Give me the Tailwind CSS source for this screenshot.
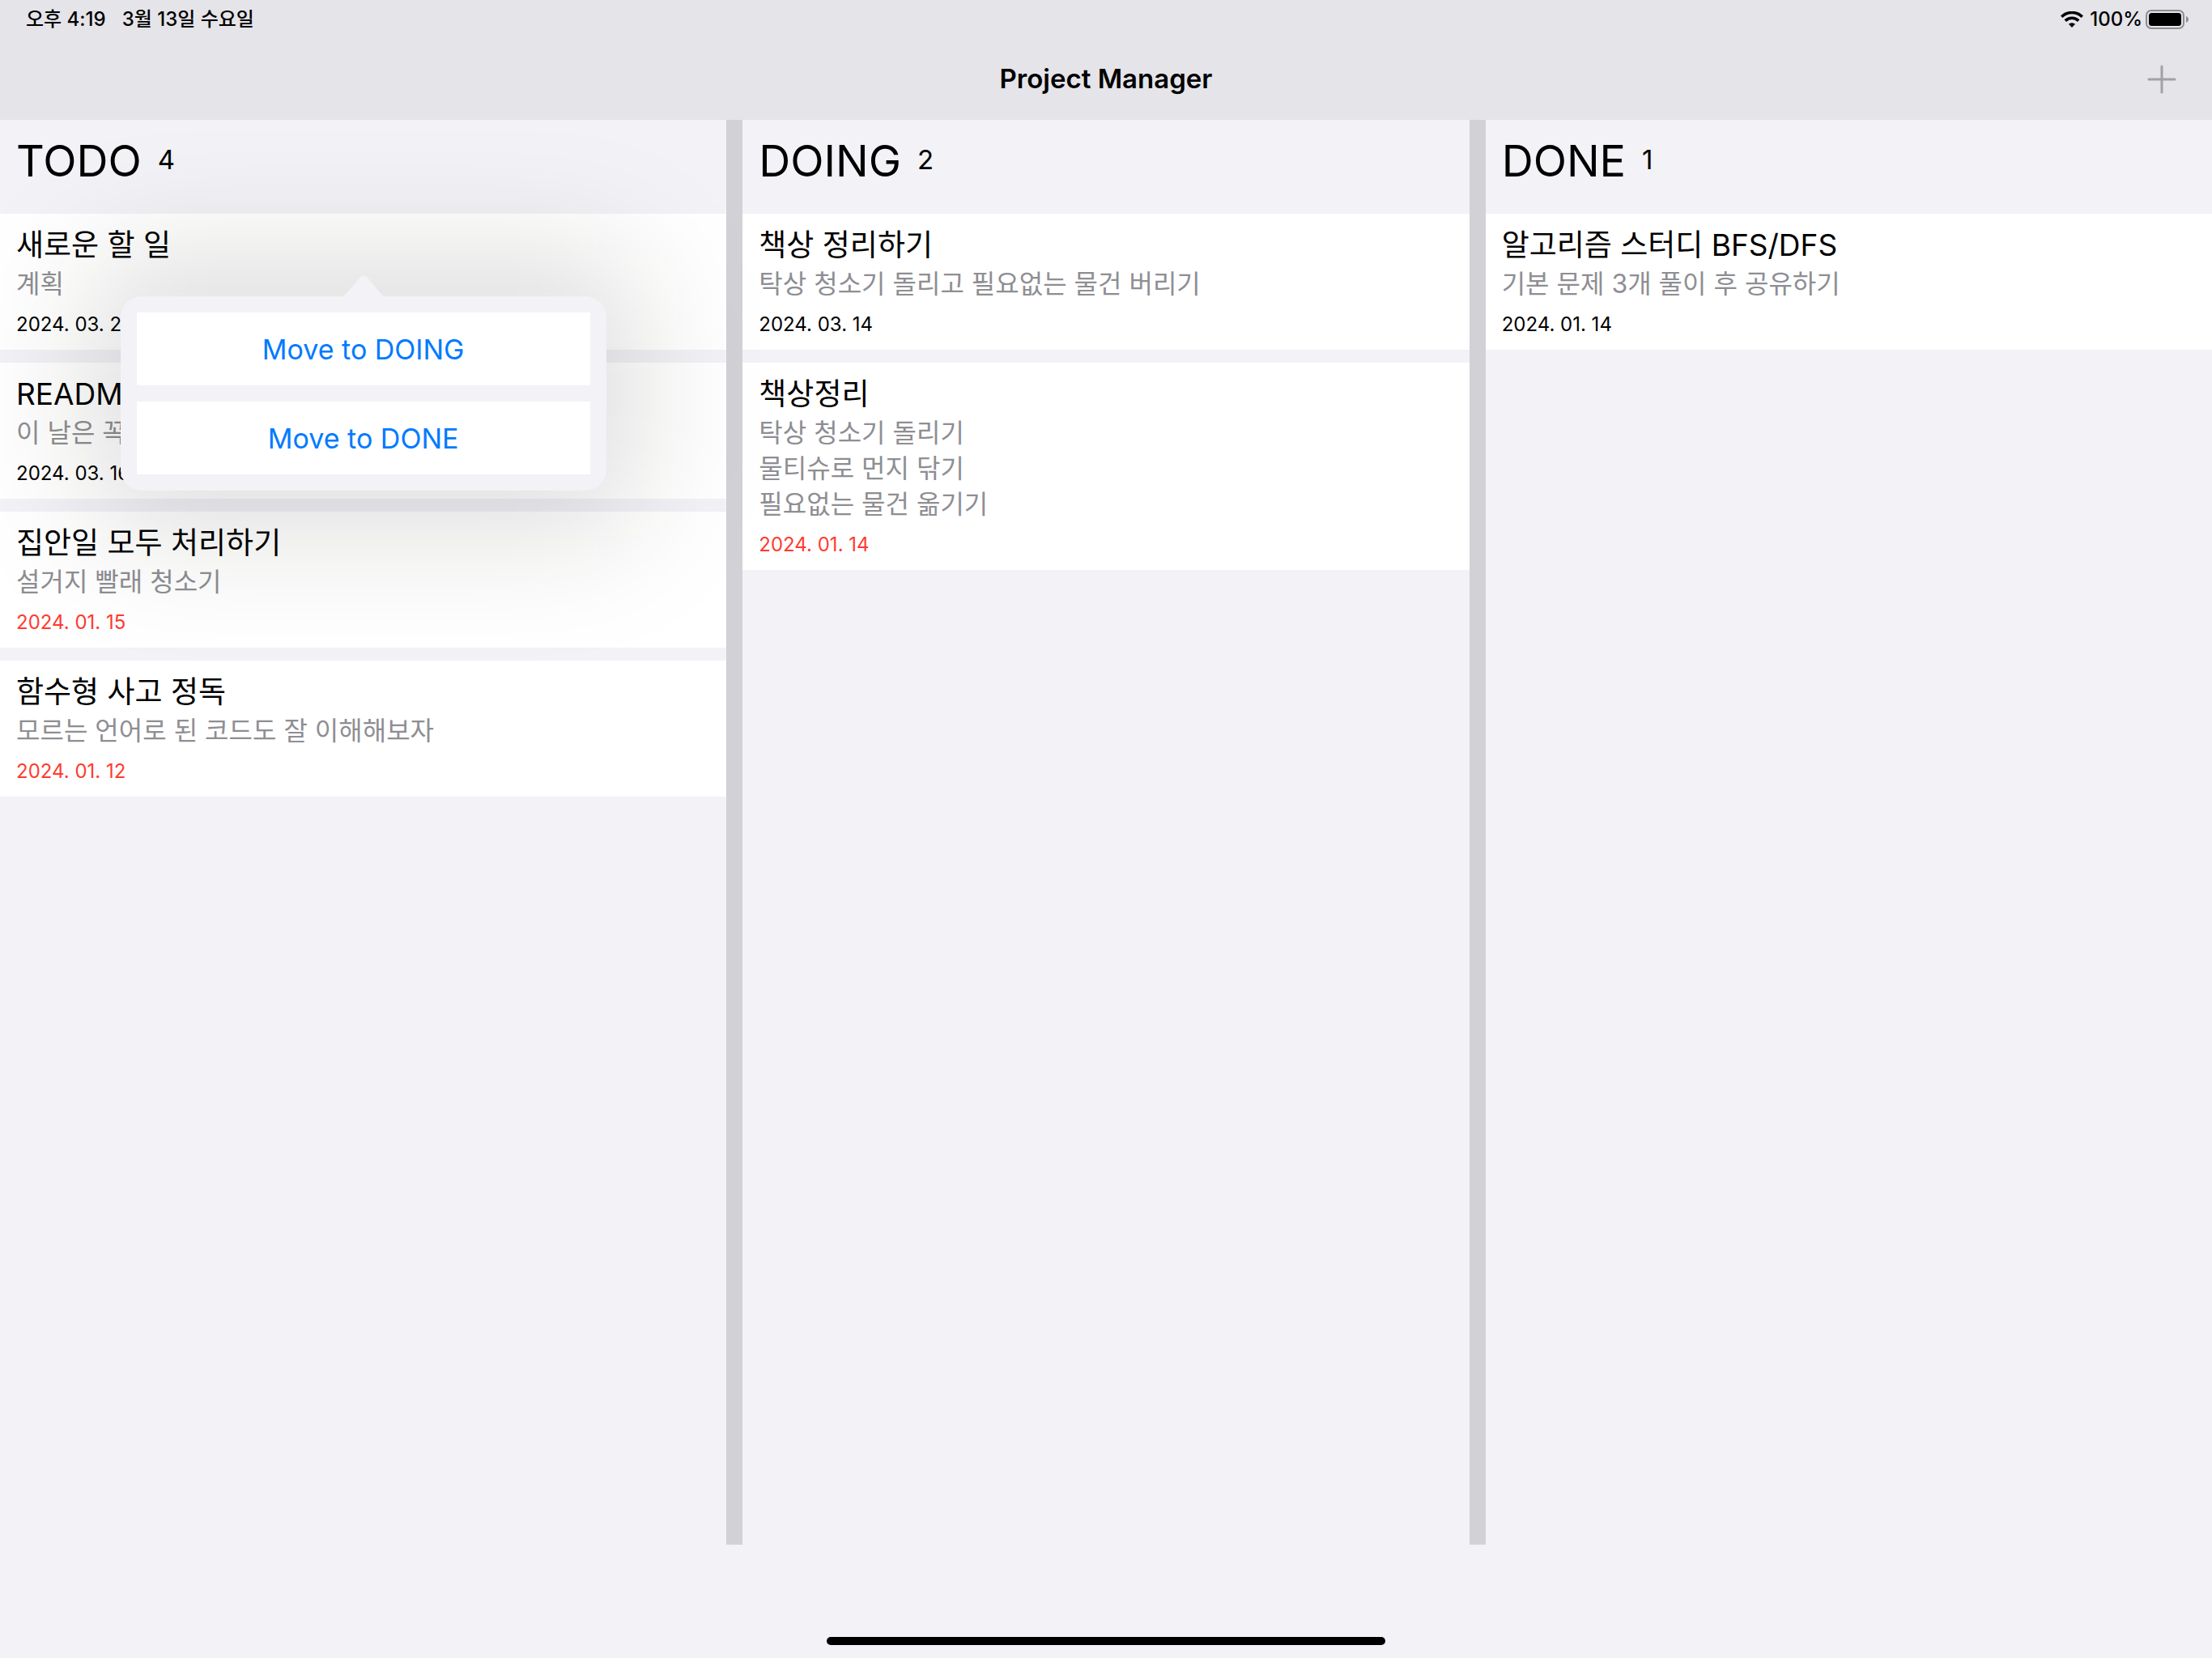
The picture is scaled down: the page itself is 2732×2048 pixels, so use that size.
<!DOCTYPE html>
<html lang="ko">
<head>
<meta charset="utf-8">
<meta name="viewport" content="width=device-width, initial-scale=1">
<title>Project Manager</title>
<script src="https://cdn.jsdelivr.net/npm/@tailwindcss/browser@4"></script>
</head>
<body class="flex min-h-screen flex-col overflow-x-hidden bg-[#f2f2f7] font-['Inter','Noto_Sans_CJK_KR',sans-serif] text-black">
  <header class="bg-[#e5e4e9]">
    <div class="flex h-12 items-center justify-between pr-7 pl-8 text-[24px] font-medium">
      <div class="flex gap-5">
        <time>오후 4:19</time>
        <span>3월 13일 수요일</span>
      </div>
      <div class="flex items-center">
        <svg class="mr-2 h-5 w-7" viewBox="0 0 28 20" fill="none" stroke="#000" stroke-width="3.6" aria-label="Wi-Fi">
          <path d="M1.2 6.8A18.2 18.2 0 0 1 26.8 6.8"/>
          <path d="M5.8 11.6A11.8 11.8 0 0 1 22.2 11.6"/>
          <path d="M14 20l-4.1-4.2a5.9 5.9 0 0 1 8.2 0z" fill="#000" stroke="none"/>
        </svg>
        <span>100%</span>
        <svg class="ml-1 h-6 w-[54px]" viewBox="0 0 54 24" aria-label="Battery">
          <rect x="1" y="1" width="46" height="22" rx="6" fill="none" stroke="#8e8d91" stroke-width="2"/>
          <rect x="4" y="4" width="40" height="16" rx="3.5"/>
          <path d="M50 8c4 1.600 4 6.400 0 8z" fill="#8e8d91"/>
        </svg>
      </div>
    </div>
    <nav class="grid h-25 grid-cols-[1fr_auto_1fr] items-center px-11">
      <h1 class="col-start-2 text-[33px] font-semibold">Project Manager</h1>
      <button type="button" aria-label="Add" class="justify-self-end">
        <svg class="h-9 w-9" viewBox="0 0 36 36" stroke="#a2a1a4" stroke-width="3" stroke-linecap="round"><path d="M18 2v32M2 18h32"/></svg>
      </button>
    </nav>
  </header>

  <main class="grid grow grid-cols-3 gap-5 bg-[#d1d1d6]">
    <section class="bg-[#f2f2f7]">
      <div class="flex h-29 items-center gap-5 px-5 pb-4">
        <h2 class="text-[54px]">TODO</h2>
        <span class="text-[33px]">4</span>
      </div>
      <ul class="flex flex-col gap-4">
        <li class="relative bg-white px-5 pt-[17px] pb-[15px]">
          <h3 class="text-[37px] leading-11">새로운 할 일</h3>
          <p class="mt-1 text-[32px] leading-11 text-[#8e8e93]">계획</p>
          <p class="mt-3 text-[24px] leading-8">2024. 03. 20</p>
          <div role="dialog" aria-label="Move" class="absolute top-[102px] left-1/2 z-10 w-150 -translate-x-1/2">
            <!-- soft shadow around the popover -->
            <div class="pointer-events-none absolute -inset-x-10 -inset-y-14 rounded-[60px] bg-[#10100a]/13 blur-[76px]"></div>
            <div class="relative flex flex-col gap-5 rounded-[26px] bg-[#f2f2f7] p-5">
              <svg class="absolute -top-[26px] left-1/2 h-[27px] w-15 -translate-x-1/2" viewBox="0 0 60 27" fill="#f2f2f7"><path d="M0 27c4 0 6-2 9-5L25 3q5-5 10 0l16 19c3 3 5 5 9 5z"/></svg>
              <button type="button" class="h-[90px] bg-white text-[34px] text-[#007aff]">Move to DOING</button>
              <button type="button" class="h-[90px] bg-white text-[34px] text-[#007aff]">Move to DONE</button>
            </div>
          </div>
        </li>
        <li class="bg-white px-5 pt-[17px] pb-[15px]">
          <h3 class="text-[37px] leading-11">README</h3>
          <p class="mt-1 text-[32px] leading-11 text-[#8e8e93]">이 날은 꼭</p>
          <p class="mt-3 text-[24px] leading-8">2024. 03. 16</p>
        </li>
        <li class="bg-white px-5 pt-[17px] pb-[15px]">
          <h3 class="text-[37px] leading-11">집안일 모두 처리하기</h3>
          <p class="mt-1 text-[32px] leading-11 text-[#8e8e93]">설거지 빨래 청소기</p>
          <p class="mt-3 text-[24px] leading-8 text-[#ff3b30]">2024. 01. 15</p>
        </li>
        <li class="bg-white px-5 pt-[17px] pb-[15px]">
          <h3 class="text-[37px] leading-11">함수형 사고 정독</h3>
          <p class="mt-1 text-[32px] leading-11 text-[#8e8e93]">모르는 언어로 된 코드도 잘 이해해보자</p>
          <p class="mt-3 text-[24px] leading-8 text-[#ff3b30]">2024. 01. 12</p>
        </li>
      </ul>
    </section>

    <section class="bg-[#f2f2f7]">
      <div class="flex h-29 items-center gap-5 px-5 pb-4">
        <h2 class="text-[54px]">DOING</h2>
        <span class="text-[33px]">2</span>
      </div>
      <ul class="flex flex-col gap-4">
        <li class="bg-white px-5 pt-[17px] pb-[15px]">
          <h3 class="text-[37px] leading-11">책상 정리하기</h3>
          <p class="mt-1 text-[32px] leading-11 text-[#8e8e93]">탁상 청소기 돌리고 필요없는 물건 버리기</p>
          <p class="mt-3 text-[24px] leading-8">2024. 03. 14</p>
        </li>
        <li class="bg-white px-5 pt-[17px] pb-[15px]">
          <h3 class="text-[37px] leading-11">책상정리</h3>
          <p class="mt-1 text-[32px] leading-11 text-[#8e8e93]">탁상 청소기 돌리기<br>물티슈로 먼지 닦기<br>필요없는 물건 옮기기</p>
          <p class="mt-3 text-[24px] leading-8 text-[#ff3b30]">2024. 01. 14</p>
        </li>
      </ul>
    </section>

    <section class="bg-[#f2f2f7]">
      <div class="flex h-29 items-center gap-5 px-5 pb-4">
        <h2 class="text-[54px]">DONE</h2>
        <span class="text-[33px]">1</span>
      </div>
      <ul class="flex flex-col gap-4">
        <li class="bg-white px-5 pt-[17px] pb-[15px]">
          <h3 class="text-[37px] leading-11">알고리즘 스터디 BFS/DFS</h3>
          <p class="mt-1 text-[32px] leading-11 text-[#8e8e93]">기본 문제 3개 풀이 후 공유하기</p>
          <p class="mt-3 text-[24px] leading-8">2024. 01. 14</p>
        </li>
      </ul>
    </section>
  </main>

  <footer class="flex h-35 items-end justify-center pb-4">
    <div class="h-[10px] w-[690px] rounded-full bg-black"></div>
  </footer>
</body>
</html>
